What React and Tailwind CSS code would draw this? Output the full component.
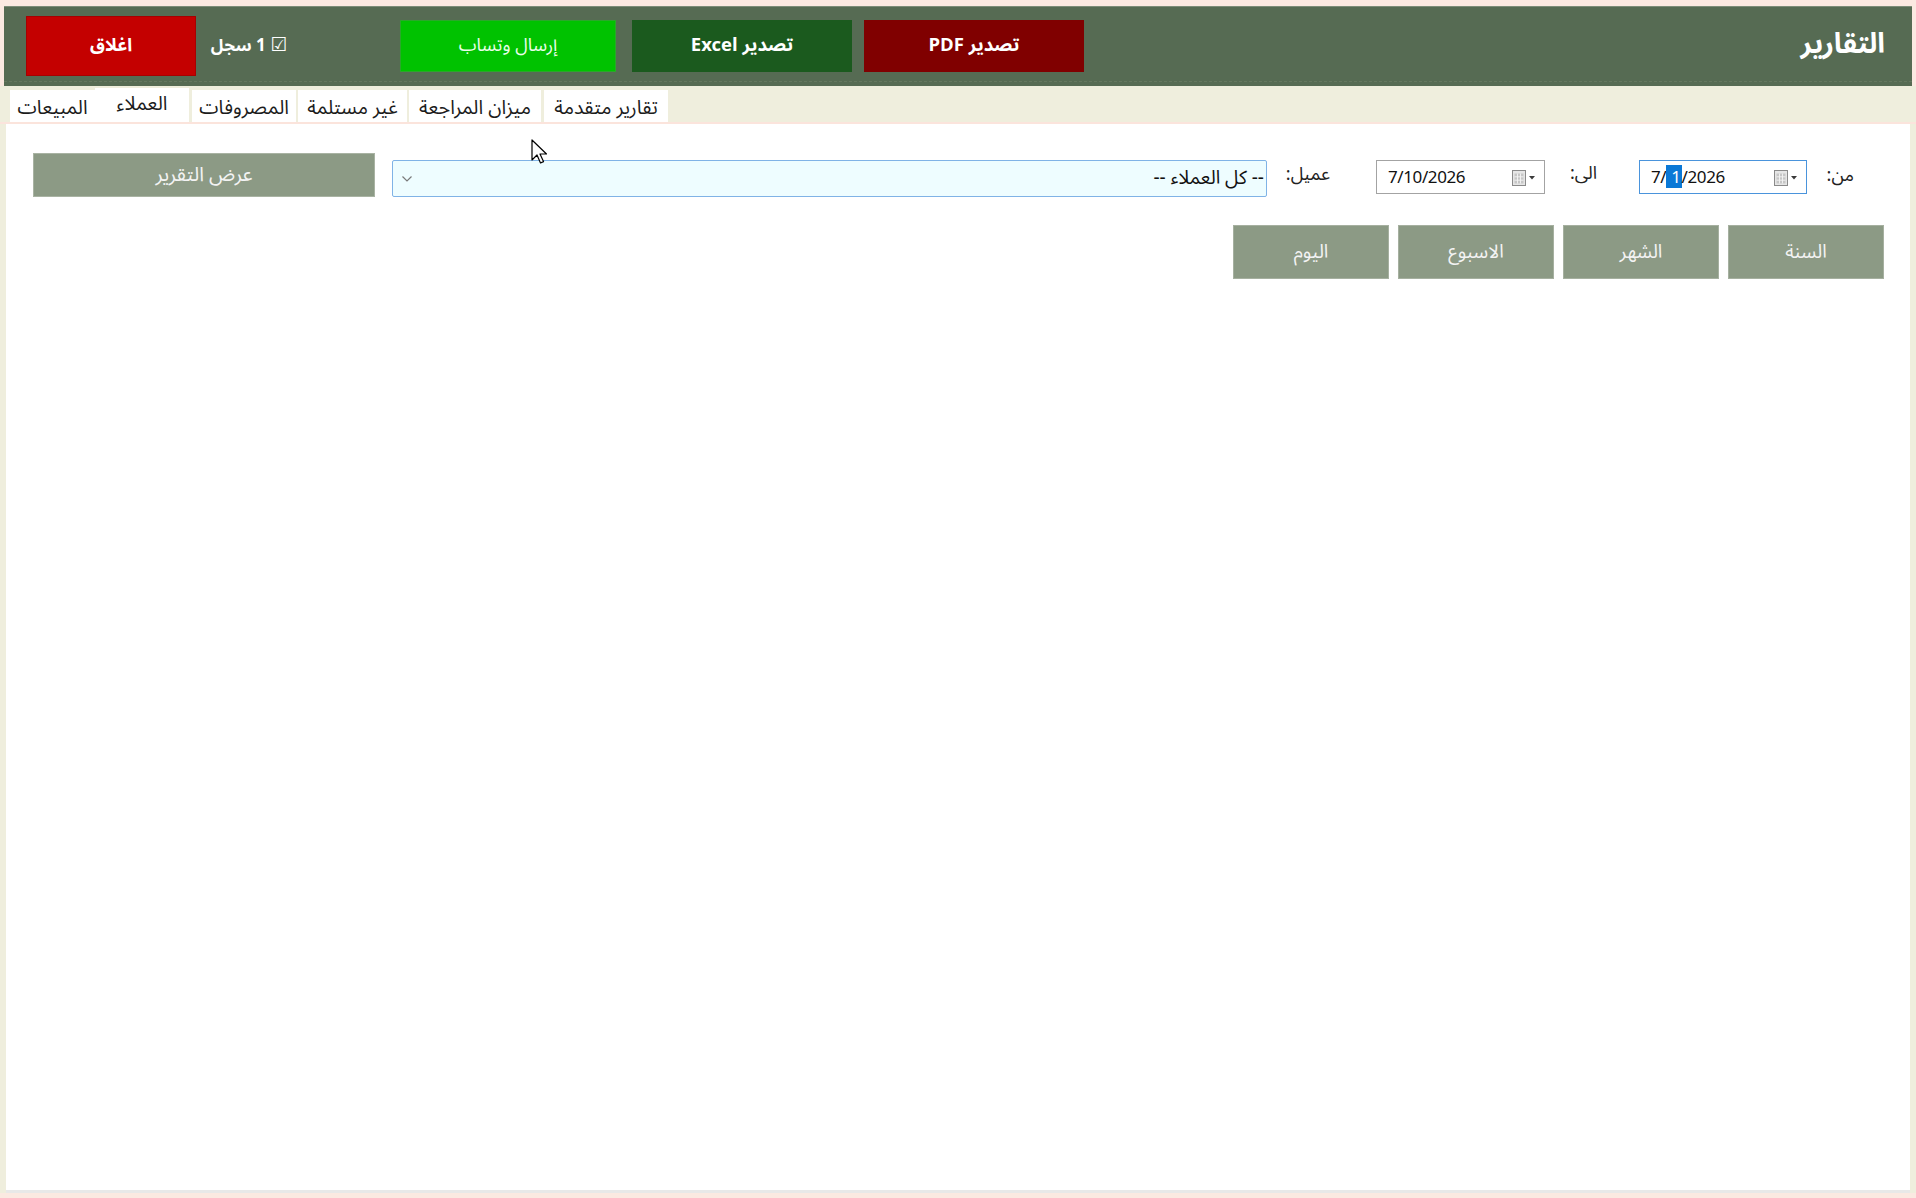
import React from "react";

const AR = { fontFamily: '"Noto Sans Arabic", "Noto Kufi Arabic", "DejaVu Sans", sans-serif' };
const LAT = { fontFamily: '"Noto Sans", "Open Sans", "DejaVu Sans", sans-serif' };

function CalIcon() {
  return (
    <svg width="24" height="17" viewBox="0 0 24 17" className="shrink-0">
      <rect x="0.5" y="1.5" width="13" height="15" fill="#e6e6e6" stroke="#8a8a8a" />
      <rect x="2.5" y="4.5" width="9" height="10" fill="#c6c6c6" />
      <path d="M2.5 7.8h9M2.5 11.2h9M5.5 4.5v10M8.5 4.5v10" stroke="#f4f4f4" strokeWidth="0.9" />
      <path d="M17 7h6l-3 3.5z" fill="#3a3a3a" />
    </svg>
  );
}

function DateBox({ focused, children, w }) {
  return (
    <div
      dir="ltr"
      className={`h-[34px] ${w} bg-white border flex items-center pl-[11px] pr-[8px] ${
        focused ? "border-[#4a94dc]" : "border-[#a3a3a3]"
      }`}
    >
      <span className="text-[17px] text-[#111] tracking-[-0.4px]" style={LAT}>
        {children}
      </span>
      <span className="ml-auto">
        <CalIcon />
      </span>
    </div>
  );
}

const tabs = [
  { t: "المبيعات", w: "w-[85px]", ml: "" },
  { t: "العملاء", w: "w-[94px]", ml: "", sel: true },
  { t: "المصروفات", w: "w-[104px]", ml: "ml-[3px]" },
  { t: "غير مستلمة", w: "w-[109px]", ml: "ml-[2px]" },
  { t: "ميزان المراجعة", w: "w-[132px]", ml: "ml-[2px]" },
  { t: "تقارير متقدمة", w: "w-[124px]", ml: "ml-[3px]" },
];

export default function App() {
  return (
    <div className="w-[1916px] h-[1198px] bg-[#fbe9e1] overflow-hidden relative flex flex-col" style={AR}>
      {/* header */}
      <div className="mt-[6px] mx-[4px] h-[80px] bg-[#566b53] border-t border-[#7c8c78] flex flex-col shrink-0">
        <div dir="ltr" className="flex-1 flex items-center border-b border-dashed border-[#65785f] mt-[3px] mb-[4px]">
          <button className="ml-[22px] w-[170px] h-[60px] bg-[#c40000] border border-[#a80000] text-white font-bold text-[18px]" style={AR}>
            اغلاق
          </button>
          <div dir="rtl" className="ml-[14px] w-[78px] text-white font-bold text-[17px] whitespace-nowrap text-center">
            <span className="text-[19px]">☑</span> 1 سجل
          </div>
          <button className="ml-[112px] w-[216px] h-[52px] bg-[#00c200] border border-[#2aa82a] text-[#eaffea] text-[18px]" style={AR}>
            إرسال وتساب
          </button>
          <button className="ml-[16px] w-[220px] h-[52px] bg-[#1b5a1e] text-white font-bold text-[18.5px]" style={AR}>
            <span dir="rtl">تصدير Excel</span>
          </button>
          <button className="ml-[12px] w-[220px] h-[52px] bg-[#800000] text-white font-bold text-[18.5px]" style={AR}>
            <span dir="rtl">تصدير PDF</span>
          </button>
          <div className="ml-auto mr-[27px] text-white font-bold text-[28px] leading-none pb-[2px]">التقارير</div>
        </div>
      </div>

      {/* body */}
      <div className="flex-1 bg-[#efeedd] flex flex-col mb-[5px]">
        <div dir="ltr" className="h-[36px] flex items-end pl-[10px] shrink-0">
          {tabs.map((tb) => (
            <div
              key={tb.t}
              className={`${tb.w} ${tb.ml} bg-white flex justify-center items-center text-[19.5px] leading-none text-[#1c1c1c] whitespace-nowrap ${
                tb.sel ? "h-[34px] pb-[3px]" : "h-[32px] pt-[4px]"
              }`}
            >
              {tb.t}
            </div>
          ))}
        </div>
        <div className="h-[2px] bg-[#fbe4dc] shrink-0" />
        <div dir="rtl" className="flex-1 bg-white ml-[6px] mr-[6px] border-b-[3px] border-[#e8e8e8] flex flex-col pt-[29px]">
          {/* row 1 */}
          <div className="flex items-start pr-[56px]">
            <div className="w-[31px] mt-[9px] text-[18px] text-[#222] whitespace-nowrap">من:</div>
            <div className="mr-[16px] mt-[7px]">
              <DateBox focused w="w-[168px]">
                7/<span className="bg-[#0a78d6] text-white pl-[5px] pr-[1px]">1</span>/2026
              </DateBox>
            </div>
            <div className="mr-[42px] mt-[7px] w-[37px] text-[18px] text-[#222] whitespace-nowrap">الى:</div>
            <div className="mr-[15px] mt-[7px]">
              <DateBox w="w-[169px]">7/10/2026</DateBox>
            </div>
            <div className="mr-[46px] mt-[8px] w-[47px] text-[18px] text-[#222] whitespace-nowrap">عميل:</div>
            <div className="mr-[16px] mt-[7px] w-[875px] h-[37px] bg-[#eefdff] border border-[#80b3e6] rounded-[2px] flex items-center pr-[2px] pl-[8px]">
              <span className="text-[19px] text-[#111]">-- كل العملاء --</span>
              <svg className="mr-auto" width="12" height="8" viewBox="0 0 12 8">
                <path d="M1.5 1.5l4.5 4.5 4.5-4.5" fill="none" stroke="#7a7a7a" strokeWidth="1.2" />
              </svg>
            </div>
            <button className="mr-[17px] w-[342px] h-[44px] bg-[#8c9a85] border border-[#a9b3a3] text-[#f3f3f3] text-[20px]" style={AR}>
              عرض التقرير
            </button>
          </div>
          {/* row 2 */}
          <div className="flex gap-[9px] pr-[26px] mt-[28px]">
            {["السنة", "الشهر", "الاسبوع", "اليوم"].map((b) => (
              <button key={b} className="w-[156px] h-[54px] bg-[#8c9a85] border border-[#a6b0a0] text-[#f3f3f3] text-[19px]" style={AR}>
                {b}
              </button>
            ))}
          </div>
        </div>
      </div>

      {/* mouse cursor */}
      <svg className="absolute left-[531px] top-[139px]" width="16" height="26" viewBox="0 0 16 26">
        <path d="M1 1v20l5-5 3.5 8 3-1.4-3.5-7.6h6.5z" fill="#fff" stroke="#000" strokeWidth="1.2" strokeLinejoin="round" />
      </svg>
    </div>
  );
}
